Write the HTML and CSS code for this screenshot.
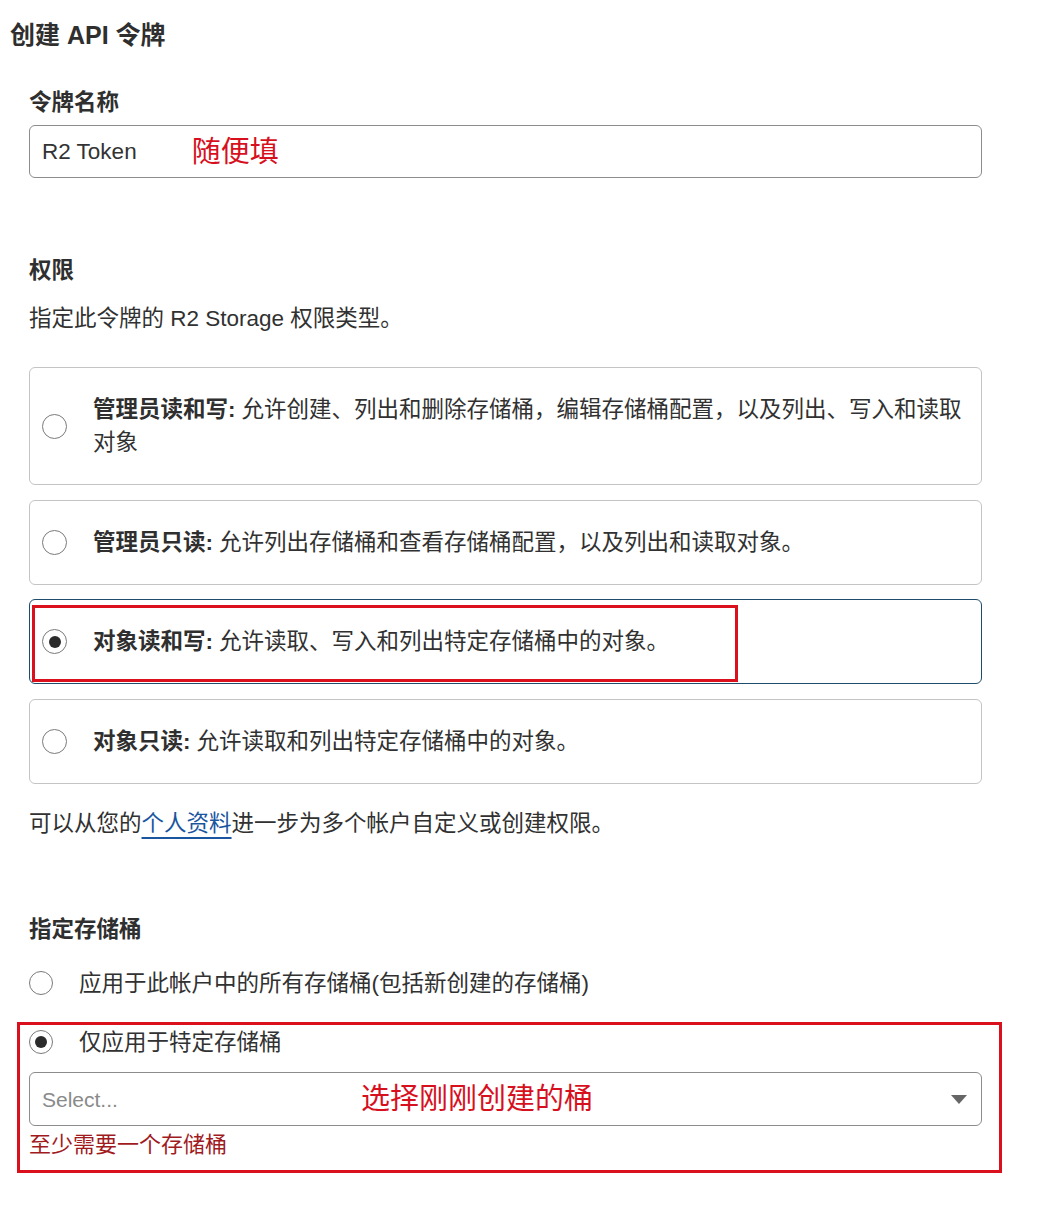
FILE: index.html
```html
<!DOCTYPE html>
<html lang="zh-CN">
<head>
<meta charset="utf-8">
<title>创建 API 令牌</title>
<link rel="stylesheet" href="styles.css">
</head>
<body>
<div class="page">
  <h1 class="title">创建 API 令牌</h1>
  <div class="content">
    <div class="field">
      <div class="label">令牌名称</div>
      <div class="input">
        <span class="value">R2 Token</span>
        <span class="note note-name">随便填</span>
      </div>
    </div>

    <section class="perm">
      <h2 class="label label-perm">权限</h2>
      <p class="desc">指定此令牌的 R2 Storage 权限类型。</p>
      <div class="cards">
        <div class="card">
          <span class="radio"></span>
          <p class="card-text"><b>管理员读和写:</b><span>允许创建、列出和删除存储桶，编辑存储桶配置，以及列出、写入和读取</span><br><span>对象</span></p>
        </div>
        <div class="card">
          <span class="radio"></span>
          <p class="card-text"><b>管理员只读:</b>允许列出存储桶和查看存储桶配置，以及列出和读取对象。</p>
        </div>
        <div class="card card-selected">
          <span class="radio radio-on"></span>
          <p class="card-text"><b>对象读和写:</b>允许读取、写入和列出特定存储桶中的对象。</p>
          <div class="mark mark-card"></div>
        </div>
        <div class="card">
          <span class="radio"></span>
          <p class="card-text"><b>对象只读:</b>允许读取和列出特定存储桶中的对象。</p>
        </div>
      </div>
      <p class="hint">可以从您的<a class="link" href="#">个人资料</a>进一步为多个帐户自定义或创建权限。</p>
    </section>

    <section class="buckets">
      <h2 class="label label-buckets">指定存储桶</h2>
      <div class="row row-all">
        <span class="radio"></span>
        <span class="row-text">应用于此帐户中的所有存储桶(包括新创建的存储桶)</span>
      </div>
      <div class="specific">
        <div class="row">
          <span class="radio radio-on"></span>
          <span class="row-text">仅应用于特定存储桶</span>
        </div>
        <div class="select">
          <span class="placeholder">Select...</span>
          <span class="note note-select">选择刚刚创建的桶</span>
          <span class="caret"></span>
        </div>
        <div class="error">至少需要一个存储桶</div>
        <div class="mark mark-section"></div>
      </div>
    </section>
  </div>
</div>
</body>
</html>
```

FILE: styles.css
```css
* {
  box-sizing: border-box;
}

html, body {
  margin: 0;
  padding: 0;
  background: #ffffff;
}

body {
  font-family: "Liberation Sans", "Noto Sans CJK SC", sans-serif;
  font-size: 22.5px;
  line-height: 33px;
  color: #313131;
}

.page {
  padding: 18px 0 50px 0;
  width: 1040px;
}

.title {
  margin: 0 0 0 10px;
  font-size: 25px;
  line-height: 34px;
  font-weight: 700;
  color: #2f2f2f;
}

.content {
  margin-left: 29px;
  width: 953px;
}

.label {
  margin: 34px 0 0 0;
  font-size: 22.5px;
  line-height: 33px;
  font-weight: 700;
  color: #2f2f2f;
}

.input {
  margin-top: 6px;
  height: 53px;
  border: 1px solid #8c8c8c;
  border-radius: 6px;
  padding: 0 12px;
  display: flex;
  align-items: center;
}

.value {
  color: #333333;
}

.note {
  color: #d7101e;
  font-size: 29px;
  line-height: 36px;
}

.note-name {
  margin-left: 55px;
}

.label-perm {
  margin-top: 76px;
}

.desc {
  margin: 15px 0 0 0;
}

.cards {
  margin-top: 32px;
  display: flex;
  flex-direction: column;
  gap: 14.5px;
}

.card {
  position: relative;
  display: flex;
  align-items: center;
  border: 1px solid #c4c4c4;
  border-radius: 6px;
  padding: 25px 14px 25px 12px;
}

.card-selected {
  border-color: #1d4c6c;
}

.card-text {
  margin: 0 0 0 26px;
  flex: 1;
}

.card-text b {
  font-weight: 700;
  color: #2f2f2f;
  margin-right: 6px;
}

.radio {
  flex: none;
  width: 25px;
  height: 25px;
  border: 1px solid #7a7a7a;
  border-radius: 50%;
  background: #ffffff;
  display: flex;
  align-items: center;
  justify-content: center;
}

.radio-on::after {
  content: "";
  width: 12px;
  height: 12px;
  border-radius: 50%;
  background: #2b2b2b;
}

.hint {
  margin: 23px 0 0 0;
}

.link {
  color: #1a55a0;
  text-decoration: underline;
  text-decoration-thickness: 2px;
  text-underline-offset: 6px;
}

.label-buckets {
  margin-top: 73px;
}

.row {
  display: flex;
  align-items: center;
  gap: 26px;
}

.row .radio {
  width: 24px;
  height: 24px;
}

.row-all {
  margin-top: 21px;
}

.specific {
  position: relative;
  margin-top: 26px;
}

.select {
  margin-top: 13.5px;
  height: 54px;
  border: 1px solid #8c8c8c;
  border-radius: 6px;
  padding: 0 14px 0 12px;
  display: flex;
  align-items: center;
}

.placeholder {
  color: #8a8a8a;
  font-size: 21px;
}

.note-select {
  margin-left: 243px;
}

.caret {
  margin-left: auto;
  width: 0;
  height: 0;
  border-left: 8px solid transparent;
  border-right: 8px solid transparent;
  border-top: 9px solid #666666;
}

.error {
  margin-top: 1.5px;
  color: #a01a1e;
  font-size: 22px;
}

.mark {
  position: absolute;
  border: 3px solid #da101d;
  pointer-events: none;
}

.mark-card {
  left: 2px;
  top: 5px;
  width: 706px;
  height: 77px;
}

.mark-section {
  left: -12px;
  top: -3.5px;
  width: 985px;
  height: 151px;
}
```
